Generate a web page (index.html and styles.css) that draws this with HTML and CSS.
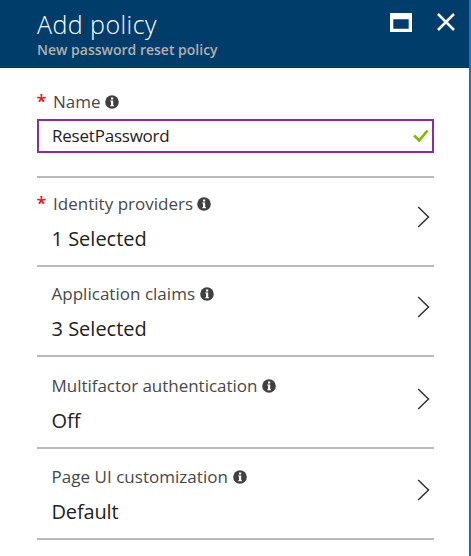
FILE: index.html
```html
<!DOCTYPE html>
<html lang="en">
<head>
<meta charset="utf-8">
<title>Add policy</title>
<link rel="stylesheet" href="styles.css">
</head>
<body>
<svg class="defs" width="0" height="0" aria-hidden="true">
  <symbol id="info" viewBox="0 0 14 14">
    <circle cx="7" cy="7" r="6.8" fill="#404040"/>
    <path d="M6 2.500h2.200v2H6zM5.200 5.400h3v4.900h.8v1H5.200v-1H6V6.400h-.8z" fill="#fff"/>
  </symbol>
  <symbol id="chevron" viewBox="0 0 14 22">
    <path d="M1.200 1l10.300 10L1.200 21" fill="none" stroke="#333" stroke-width="1.500"/>
  </symbol>
</svg>
<main class="blade">
  <header class="header">
    <div class="titles">
      <h1 class="title">Add policy</h1>
      <p class="subtitle">New password reset policy</p>
    </div>
    <div class="actions">
      <svg width="22" height="19" viewBox="0 0 22 19"><path fill="#fff" fill-rule="evenodd" d="M0 0h22v19H0zM3.300 6.200v9.500h15.400V6.200z"/></svg>
      <svg width="18" height="18" viewBox="0 0 18 18"><path d="M1 1l16 16M17 1L1 17" stroke="#fff" stroke-width="2.500"/></svg>
    </div>
  </header>
  <section class="form">
    <div class="label name-label"><span class="required">*</span><span>Name</span><svg class="info"><use href="#info"/></svg></div>
    <div class="input"><span class="input-text">ResetPassword</span>
      <svg width="16" height="14" viewBox="0 0 16 14"><path d="M1.200 6.500l5 5L14.500 1.500" fill="none" stroke="#7fba00" stroke-width="2.600"/></svg>
    </div>
    <div class="row row-identity">
      <div class="label"><span class="required">*</span><span class="label-identity">Identity providers</span><svg class="info"><use href="#info"/></svg></div>
      <div class="value">1 Selected</div>
      <svg class="chevron"><use href="#chevron"/></svg>
    </div>
    <div class="row row-claims">
      <div class="label"><span class="label-claims">Application claims</span><svg class="info"><use href="#info"/></svg></div>
      <div class="value">3 Selected</div>
      <svg class="chevron"><use href="#chevron"/></svg>
    </div>
    <div class="row row-mfa">
      <div class="label"><span>Multifactor authentication</span><svg class="info"><use href="#info"/></svg></div>
      <div class="value">Off</div>
      <svg class="chevron"><use href="#chevron"/></svg>
    </div>
    <div class="row row-page">
      <div class="label"><span class="label-page">Page UI customization</span><svg class="info"><use href="#info"/></svg></div>
      <div class="value value-default">Default</div>
      <svg class="chevron"><use href="#chevron"/></svg>
    </div>
  </section>
</main>
</body>
</html>
```
FILE: styles.css
```css
* { box-sizing: border-box; }
body { margin: 0; background: #fff; font-family: "Open Sans", "Noto Sans", sans-serif; color: #222; }
.defs { display: block; height: 0; }
svg { display: block; flex: none; }
.blade { height: 556px; border-right: 2px solid #0b76cc; overflow: hidden; }
.header { height: 68px; padding: 7px 14px 0 37px; background: #003d6b; display: flex; justify-content: space-between; }
.title { margin: 0; font-size: 25px; line-height: 34px; font-weight: 300; letter-spacing: 0.45px; color: #fff; white-space: nowrap; }
.subtitle { margin: 0; font-size: 14px; line-height: 18px; font-weight: 600; color: #b0b0b0; white-space: nowrap; }
.actions { display: flex; gap: 25px; padding-top: 6px; }
.form { padding: 0 35px 0 37px; }
.label { display: flex; align-items: center; height: 24px; font-size: 17px; line-height: 24px; letter-spacing: -0.03px; color: #484848; padding-left: 14.5px; white-space: nowrap; }
.required { width: 16.5px; margin-left: -15px; margin-top: -2px; color: #e81123; font-size: 18px; font-weight: 600; }
.info { width: 14px; height: 14px; margin-left: 5px; }
.name-label { margin-top: 22px; }
.name-label .info { margin-top: -1px; margin-left: 4.5px; }
.row .info { margin-top: -1px; }
.label-identity, .label-claims { letter-spacing: 0.02px; }
.label-page { letter-spacing: 0.03px; }
.row-identity .info { margin-left: 4px; }
.input { margin-top: 5px; height: 34px; border: 2px solid #8a2da5; padding: 0 3px 0 13px; display: flex; align-items: center; justify-content: space-between; font-size: 17px; }
.input-text { line-height: 24px; margin-top: -1px; letter-spacing: -0.22px; }
.input + .row { margin-top: 23px; border-top: 2px solid #b9b9b9; }
.row { display: grid; grid-template-columns: 1fr 14px; align-content: end; row-gap: 9px; padding: 0 3px 12px 0; border-bottom: 2px solid #b9b9b9; }
.value { grid-column: 1; font-size: 20px; line-height: 28px; letter-spacing: 0; padding-left: 14.5px; white-space: nowrap; }
.value-default { letter-spacing: -0.15px; }
.chevron { grid-column: 2; grid-row: 1 / 3; width: 14px; height: 22px; align-self: center; margin-top: -12px; }
.row-identity { height: 91px; }
.row-claims { height: 90px; }
.row-mfa { height: 92px; }
.row-page { height: 91px; }
```
